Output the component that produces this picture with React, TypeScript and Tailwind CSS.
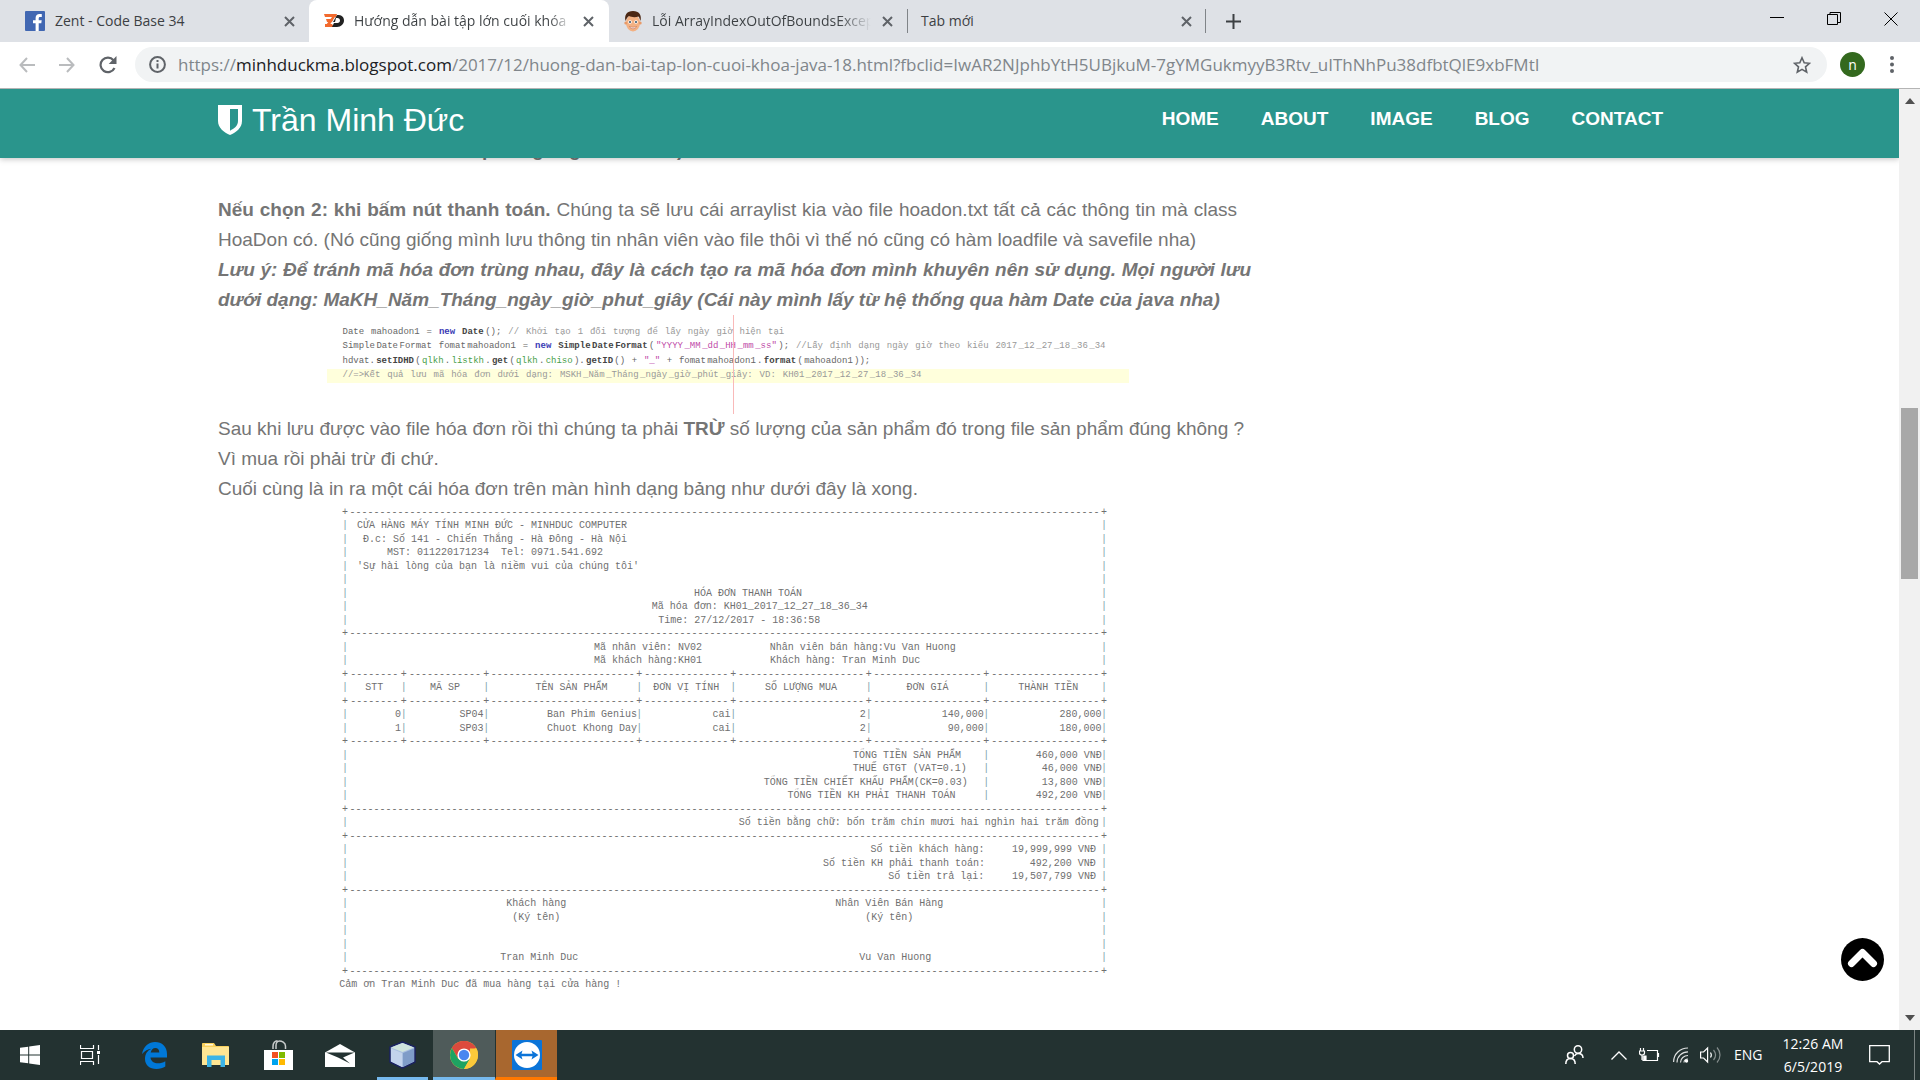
import React from "react";

const UI_FONT = "font-['Open_Sans','Noto_Sans',sans-serif]";

/* ---------- Browser chrome ---------- */

function Cross({ className = "" }: { className?: string }) {
  return (
    <svg className={className} width="11" height="11" viewBox="0 0 11 11" fill="none" stroke="#5f6368" strokeWidth="2">
      <path d="M1 1l9 9M10 1l-9 9" />
    </svg>
  );
}

function FacebookIcon() {
  return (
    <svg width="20" height="20" viewBox="0 0 20 20">
      <rect width="20" height="20" rx="1" fill="#4167b2" />
      <path d="M13.700 20v-7.700h2.600l.4-3h-3V7.400c0-.9.25-1.500 1.500-1.500h1.600V3.200c-.3 0-1.200-.1-2.300-.1-2.300 0-3.900 1.400-3.900 4v2.200H8v3h2.600V20z" fill="#fff" />
    </svg>
  );
}

function ZentIcon() {
  return (
    <svg width="20" height="14" viewBox="0 0 20 14">
      <path d="M0 0h13l-1 3H1zM2 5h7l-1 3H3zM1 10h7l2 3H1z" fill="#f26a2e" />
      <path d="M8 3l-6 8 3 1 6-9z" fill="#f26a2e" />
      <path d="M13 1c5 0 7 2 7 5.500S17 13 13 13H8l2-4h3.500c1.500 0 2.500-1 2.500-2.500S15 4 13.500 4H12l-1 4H9z" fill="#222" />
    </svg>
  );
}

function FaceIcon() {
  return (
    <svg width="18" height="21" viewBox="0 0 18 21">
      <ellipse cx="9" cy="12" rx="7" ry="8.500" fill="#f3b183" />
      <circle cx="1.800" cy="12" r="1.500" fill="#e89a68" />
      <circle cx="16.200" cy="12" r="1.500" fill="#e89a68" />
      <path d="M1.500 10C0 4 3 0 9 0s9 4 7.500 10c-.8-2-1-3.500-2-4.500-3 1-7 .8-9.500-.5C3 6 2.500 8 1.500 10z" fill="#4b2713" />
      <circle cx="6" cy="11" r="1.800" fill="#fff" />
      <circle cx="12" cy="11" r="1.800" fill="#fff" />
      <circle cx="6" cy="11" r="1" fill="#2d4d63" />
      <circle cx="12" cy="11" r="1" fill="#2d4d63" />
      <path d="M5.500 15.500c2 1 5 1 7 0-1 3-6 3-7 0z" fill="#fff" stroke="#b8563b" strokeWidth=".5" />
    </svg>
  );
}

function TabStrip() {
  return (
    <div className="flex h-[42px] items-stretch bg-[#dee1e6] text-sm text-[#3c4043]">
      <div className="flex w-[309px] shrink-0 items-center pl-[25px] pr-[14px]">
        <FacebookIcon />
        <span className="ml-[10px] flex-1 whitespace-nowrap">Zent - Code Base 34</span>
        <button aria-label="Close tab"><Cross /></button>
      </div>
      <div className="flex w-[300px] shrink-0 items-center rounded-t-lg bg-white pl-[15px] pr-[15px]">
        <ZentIcon />
        <span className="ml-[10px] w-[217px] overflow-hidden whitespace-nowrap bg-gradient-to-r from-[#3c4043] from-90% to-white bg-clip-text text-transparent">
          Hướng dẫn bài tập lớn cuối khóa
        </span>
        <button aria-label="Close tab" className="ml-auto"><Cross /></button>
      </div>
      <div className="flex w-[298px] shrink-0 items-center pl-[15px] pr-[14px]">
        <FaceIcon />
        <span className="ml-[10px] w-[219px] overflow-hidden whitespace-nowrap bg-gradient-to-r from-[#3c4043] from-85% to-[#dee1e6] bg-clip-text text-transparent">
          Lỗi ArrayIndexOutOfBoundsExcep
        </span>
        <button aria-label="Close tab" className="ml-auto"><Cross /></button>
      </div>
      <div className="my-[9px] w-[299px] shrink-0 border-x border-[#808488] pl-[13px] pr-[13px]">
        <div className="flex h-full items-center">
          <span className="flex-1">Tab mới</span>
          <button aria-label="Close tab"><Cross /></button>
        </div>
      </div>
      <button aria-label="New tab" className="ml-[20px]">
        <svg width="15" height="15" viewBox="0 0 15 15" stroke="#3c4043" strokeWidth="2"><path d="M7.500 0v15M0 7.500h15" /></svg>
      </button>
      <div className="ml-auto flex items-start gap-[43px] pr-[22px] pt-[12px]">
        <button aria-label="Minimize">
          <svg width="14" height="14" viewBox="0 0 14 14"><path d="M0 5.500h14" stroke="#000" /></svg>
        </button>
        <button aria-label="Restore">
          <svg width="14" height="14" viewBox="0 0 14 14" fill="none" stroke="#000"><path d="M.5 2.500h10v10H.5zM3 2.500v-2h10.500v10H11" /></svg>
        </button>
        <button aria-label="Close">
          <svg width="14" height="14" viewBox="0 0 14 14" stroke="#000"><path d="M.5.5l13 13M13.500.5l-13 13" /></svg>
        </button>
      </div>
    </div>
  );
}

function Toolbar() {
  return (
    <div className="flex h-[47px] items-start border-b border-[#b4b4b4] bg-white pt-[5px]">
      <div className="flex h-[35px] w-[135px] shrink-0 items-center gap-[24px] pl-[19px]">
        <button aria-label="Back">
          <svg width="16" height="16" viewBox="0 0 16 16" fill="none" stroke="#babcbe" strokeWidth="2"><path d="M16 8H1.500M8 1L1.500 8 8 15" /></svg>
        </button>
        <button aria-label="Forward">
          <svg width="16" height="16" viewBox="0 0 16 16" fill="none" stroke="#babcbe" strokeWidth="2"><path d="M0 8h14.500M8 1l6.500 7L8 15" /></svg>
        </button>
        <button aria-label="Reload">
          <svg width="18" height="18" viewBox="0 0 18 18" fill="none" stroke="#5f6368" strokeWidth="2.200">
            <path d="M15.500 12A7.300 7.300 0 1 1 14.500 4.200" />
            <path d="M17.500 0v8H9.700z" fill="#5f6368" stroke="none" />
          </svg>
        </button>
      </div>
      <div className="flex h-[35px] min-w-0 flex-1 items-center rounded-full bg-[#f1f3f4] pl-[14px] pr-[16px]">
        <svg width="17" height="17" viewBox="0 0 17 17" fill="none" stroke="#5f6368" strokeWidth="2">
          <circle cx="8.500" cy="8.500" r="7.400" />
          <path d="M8.500 7.500v5M8.500 4v2" />
        </svg>
        <div role="textbox" aria-label="Address" className="ml-[12px] flex-1 overflow-hidden whitespace-nowrap text-[17px] leading-[24px] text-[#80868b]">
          https://<span className="text-[#202124]">minhduckma.blogspot.com</span>/2017/12/huong-dan-bai-tap-lon-cuoi-khoa-java-18.html?fbclid=IwAR2NJphbYtH5UBjkuM-7gYMGukmyyB3Rtv_uIThNhPu38dfbtQlE9xbFMtI
        </div>
        <button aria-label="Bookmark">
          <svg width="18" height="18" viewBox="0 0 18 18" fill="none" stroke="#5f6368" strokeWidth="1.600">
            <path d="M9 1.800l2.200 5 5.300.5-4 3.600 1.200 5.300L9 13.400l-4.700 2.800 1.200-5.300-4-3.600 5.300-.5z" />
          </svg>
        </button>
      </div>
      <button className="ml-[13px] mt-[5px] flex size-[25px] items-center justify-center rounded-full bg-[#33691e] text-sm leading-none text-white">n</button>
      <button aria-label="Menu" className="ml-[25px] mr-[26px] mt-[9px]">
        <svg width="4" height="17" viewBox="0 0 4 17" fill="#5f6368"><circle cx="2" cy="2" r="2" /><circle cx="2" cy="8.500" r="2" /><circle cx="2" cy="15" r="2" /></svg>
      </button>
    </div>
  );
}

/* ---------- Web page ---------- */

const NAV = ["HOME", "ABOUT", "IMAGE", "BLOG", "CONTACT"];

function SiteHeader() {
  return (
    <header className="relative z-10 h-[69px] shrink-0 bg-[#2a958c] text-white shadow-[0_1px_6px_rgba(0,0,0,0.25)]">
      <div className="mx-auto flex max-w-[1463px] items-start justify-between pr-[18px]">
        <a href="#home" className="flex items-center gap-[10px] pt-[12px] text-[32px] leading-[38px]">
          <svg width="24" height="30" viewBox="0 0 24 30">
            <path d="M0 0h24v16c0 7-6 11.500-12 14C6 27.500 0 23 0 16z" fill="#fff" />
            <path d="M12 4h8v12c0 5-4 7.500-8 9.700z" fill="#2a958c" />
          </svg>
          <span>Trần Minh Đức</span>
        </a>
        <nav className="flex gap-[42px] pt-[16px] text-[19px] font-bold leading-[28px]">
          {NAV.map((n) => (
            <a key={n} href={"#" + n.toLowerCase()}>{n}</a>
          ))}
        </nav>
      </div>
    </header>
  );
}

type Tok = [string, string?];

const KW = "text-[#3b3bb5] font-bold";
const FN = "text-[#444] font-bold";
const STR = "text-[#c04aa8]";
const OBJ = "text-[#4aa04a]";
const CM = "text-[#999]";

const words = (s: string, cls: string): Tok[] =>
  s.split(" ").map((w, i, a) => [i < a.length - 1 ? w + " " : w, cls] as Tok);

const CODE: { width: string; toks: Tok[] }[] = [
  {
    width: "w-[442px]",
    toks: [["Date "], ["mahoadon1 "], ["= "], ["new ", KW], ["Date", FN], ["(); "], ...words("// Khởi tạo 1 đối tượng để lấy ngày giờ hiện tại", CM)],
  },
  {
    width: "w-[763px]",
    toks: [
      ["Simple"], ["Date"], ["Format "], ["fomat"], ["mahoadon1 "], ["= "], ["new ", KW],
      ["Simple", FN], ["Date", FN], ["Format", FN], ["("],
      ['"YYYY', STR], ["_MM", STR], ["_dd", STR], ["_HH", STR], ["_mm", STR], ['_ss"', STR], ["); "],
      ...words("//Lấy định dạng ngày giờ theo kiểu", CM), [" 2017", CM], ["_12", CM], ["_27", CM], ["_18", CM], ["_36", CM], ["_34", CM],
    ],
  },
  {
    width: "w-[528px]",
    toks: [
      ["hdvat."], ["setIDHD", FN], ["("], ["qlkh", OBJ], ["."], ["listkh", OBJ], ["."], ["get", FN], ["("], ["qlkh", OBJ], ["."], ["chiso", OBJ], [")."],
      ["getID", FN], ["() "], ["+ "], ['"_" ', STR], ["+ "], ["fomat"], ["mahoadon1"], ["."], ["format", FN], ["("], ["mahoadon1"], ["));"],
    ],
  },
  {
    width: "w-[579px]",
    toks: [
      ...words("//=>Kết quả lưu mã hóa đơn dưới dạng:", CM), [" MSKH", CM], ["_Năm", CM], ["_Tháng", CM], ["_ngày", CM], ["_giờ", CM], ["_phút", CM],
      ["_giây: ", CM], ["VD: ", CM], ["KH01", CM], ["_2017", CM], ["_12", CM], ["_27", CM], ["_18", CM], ["_36", CM], ["_34", CM],
    ],
  },
];

function CodeFigure() {
  return (
    <figure className="relative mx-auto grid h-[99px] w-[802px] grid-rows-[10px_repeat(4,minmax(0,1fr))_31px] font-['Liberation_Mono',monospace] text-[9px] leading-none text-[#666]">
      <div />
      {CODE.map((line, i) => (
        <div key={i} className={"flex items-center pl-[16px] " + (i === 3 ? "bg-[#ffffdc]" : "")}>
          <code className={"flex justify-between whitespace-pre font-['Liberation_Mono',monospace] " + line.width}>
            {line.toks.map(([t, c], j) => (
              <span key={j} className={c}>{t}</span>
            ))}
          </code>
        </div>
      ))}
      <div />
      <div className="absolute inset-y-0 left-[406px] w-px bg-[#f9b9b9]" />
    </figure>
  );
}

/* Receipt printed on a 130-column character raster: [column, text] pieces per line. */
type Piece = [number, string];
const COLS = 130;

const rule = (...stops: number[]): Piece[] => {
  const all = [0, ...stops, 129];
  const out: Piece[] = [];
  all.forEach((c, i) => {
    out.push([c, "+"]);
    if (i < all.length - 1) out.push([c + 1, "-".repeat(all[i + 1] - c - 1)]);
  });
  return out;
};
const boxed = (...pieces: Piece[]): Piece[] => [[0, "|"], ...pieces, [129, "|"]];
const STOPS = [10, 24, 50, 66, 89, 109];
const cells = (...pieces: Piece[]): Piece[] => {
  const out: Piece[] = [[0, "|"]];
  pieces.forEach((p, i) => out.push(p, [STOPS[i] ?? 129, "|"]));
  return out;
};

const RECEIPT: Piece[][] = [
  rule(),
  boxed([3, "CỬA HÀNG MÁY TÍNH MINH ĐỨC - MINHDUC COMPUTER"]),
  boxed([4, "Đ.c: Số 141 - Chiến Thắng - Hà Đông - Hà Nội"]),
  boxed([8, "MST: 011220171234  Tel: 0971.541.692"]),
  boxed([3, "'Sự hài lòng của bạn là niềm vui của chúng tôi'"]),
  boxed(),
  boxed([60, "HÓA ĐƠN THANH TOÁN"]),
  boxed([53, "Mã hóa đơn: KH01_2017_12_27_18_36_34"]),
  boxed([54, "Time: 27/12/2017 - 18:36:58"]),
  rule(),
  boxed([43, "Mã nhân viên: NV02"], [73, "Nhân viên bán hàng:Vu Van Huong"]),
  boxed([43, "Mã khách hàng:KH01"], [73, "Khách hàng: Tran Minh Duc"]),
  rule(...STOPS),
  cells([4, "STT"], [15, "MÃ SP"], [33, "TÊN SẢN PHẨM"], [53, "ĐƠN VỊ TÍNH"], [72, "SỐ LƯỢNG MUA"], [96, "ĐƠN GIÁ"], [115, "THÀNH TIỀN"]),
  rule(...STOPS),
  cells([9, "0"], [20, "SP04"], [35, "Ban Phim Genius"], [63, "cai"], [88, "2"], [102, "140,000"], [122, "280,000"]),
  cells([9, "1"], [20, "SP03"], [35, "Chuot Khong Day"], [63, "cai"], [88, "2"], [103, "90,000"], [122, "180,000"]),
  rule(...STOPS),
  boxed([87, "TỔNG TIỀN SẢN PHẨM"], [109, "|"], [118, "460,000 VNĐ"]),
  boxed([87, "THUẾ GTGT (VAT=0.1)"], [109, "|"], [119, "46,000 VNĐ"]),
  boxed([72, "TỔNG TIỀN CHIẾT KHẤU PHẨM(CK=0.03)"], [109, "|"], [119, "13,800 VNĐ"]),
  boxed([76, "TỔNG TIỀN KH PHẢI THANH TOÁN"], [109, "|"], [118, "492,200 VNĐ"]),
  rule(),
  boxed([68, "Số tiền bằng chữ: bốn trăm chín mươi hai nghìn hai trăm đồng"]),
  rule(),
  boxed([90, "Số tiền khách hàng:"], [114, "19,999,999 VNĐ"]),
  boxed([82, "Số tiền KH phải thanh toán:"], [117, "492,200 VNĐ"]),
  boxed([93, "Số tiền trả lại:"], [114, "19,507,799 VNĐ"]),
  rule(),
  boxed([28, "Khách hàng"], [84, "Nhân Viên Bán Hàng"]),
  boxed([29, "(Ký tên)"], [89, "(Ký tên)"]),
  boxed(),
  boxed(),
  boxed([27, "Tran Minh Duc"], [88, "Vu Van Huong"]),
  rule(),
  [[0, "Cảm ơn Tran Minh Duc đã mua hàng tại cửa hàng !"]],
];

function Receipt() {
  return (
    <figure className="ml-[124px] mt-[2px] grid h-[486px] w-[765px] auto-rows-fr font-['Liberation_Mono',monospace] text-[10px] leading-none text-[#707070]">
      {RECEIPT.map((line, i) => (
        <div key={i} className="grid min-h-0 grid-cols-[repeat(130,minmax(0,1fr))] items-center">
          {line.map(([col, text], j) => {
            const dashes = text.startsWith("--");
            return (
              <span
                key={j}
                className={"flex justify-center whitespace-pre " + (text === "|" ? "text-[#7fa3ad]" : "")}
                style={{ gridColumn: `${col + 1} / span ${Math.min(text.length, COLS - col)}`, gridRow: 1 }}
              >
                {dashes ? text.slice(0, Math.floor(text.length * 0.98)) : text}
              </span>
            );
          })}
        </div>
      ))}
    </figure>
  );
}

function Article() {
  return (
    <main className="mx-auto w-full max-w-[1463px]">
      <article className="max-w-[1019px] text-justify text-[19px] leading-[30px] text-[#757575]">
        <p className="-mt-[23px] mb-[30px] flex pl-[264px] font-bold">
          <span className="w-[50px]">p</span>
          <span className="w-[37px]">g</span>
          <span className="w-[108px]">g</span>
          <span>)</span>
        </p>
        <p>
          <b>Nếu chọn 2: khi bấm nút thanh toán.</b> Chúng ta sẽ lưu cái arraylist kia vào file hoadon.txt tất cả các thông tin mà class HoaDon có. (Nó cũng giống mình lưu thông tin nhân viên vào file thôi vì thế nó cũng có hàm loadfile và savefile nha)
        </p>
        <p className="-mr-[14px] font-bold italic">
          Lưu ý: Để tránh mã hóa đơn trùng nhau, đây là cách tạo ra mã hóa đơn mình khuyên nên sử dụng. Mọi người lưu dưới dạng: MaKH_Năm_Tháng_ngày_giờ_phut_giây (Cái này mình lấy từ hệ thống qua hàm Date của java nha)
        </p>
        <CodeFigure />
        <p className="-mr-[14px] text-left">
          Sau khi lưu được vào file hóa đơn rồi thì chúng ta phải <b>TRỪ</b> số lượng của sản phẩm đó trong file sản phẩm đúng không ? Vì mua rồi phải trừ đi chứ.
        </p>
        <p>Cuối cùng là in ra một cái hóa đơn trên màn hình dạng bảng như dưới đây là xong.</p>
        <Receipt />
      </article>
    </main>
  );
}

function Scrollbar() {
  return (
    <div className="flex w-[21px] shrink-0 flex-col items-center bg-[#f1f1f1] py-[9px]">
      <svg width="10" height="6" viewBox="0 0 10 6"><path d="M5 0l5 6H0z" fill="#505050" /></svg>
      <div className="mt-[304px] h-[171px] w-[17px] bg-[#a8a8a8]" />
      <svg className="mt-auto" width="10" height="6" viewBox="0 0 10 6"><path d="M5 6l5-6H0z" fill="#505050" /></svg>
    </div>
  );
}

/* ---------- Taskbar ---------- */

function TaskButton({ label, className = "", children }: { label: string; className?: string; children: React.ReactNode }) {
  return (
    <button aria-label={label} className={"flex w-[62px] shrink-0 items-center justify-center " + className}>
      {children}
    </button>
  );
}

function Taskbar() {
  return (
    <footer className="flex h-[50px] shrink-0 items-stretch bg-[#233231] text-white">
      <button aria-label="Start" className="flex w-[60px] items-center justify-center">
        <svg width="20" height="20" viewBox="0 0 20 20" fill="#fff"><path d="M0 2.800l8.200-1.100v7.800H0zM9.200 1.500L20 0v9.500H9.200zM0 10.500h8.200v7.800L0 17.200zM9.200 10.500H20V20L9.200 18.500z" /></svg>
      </button>
      <button aria-label="Task view" className="flex w-[63px] items-center pl-[20px]">
        <svg width="21" height="20" viewBox="0 0 21 20" fill="none" stroke="#fff">
          <path d="M.5 0v3.500h13V0M.5 20v-3.500h13V20M1.500 6.500h11v7h-11zM18.500 0v5M18.500 10v9" strokeWidth="1.200" />
          <rect x="17" y="6" width="3" height="3" fill="#fff" stroke="none" />
        </svg>
      </button>
      <TaskButton label="Edge">
        <svg width="25" height="27" viewBox="0 0 25 27">
          <path d="M0 12C1.500 4 7 0 13 0c7 0 12 4.500 12 12v3.500H8.500c.3 4 3.800 5.800 7.500 5.800 2.800 0 5-.6 7.300-2v5.200C21 26 18 27 14.500 27 7.500 27 3 23 3 17c0-5 2.500-8.500 6.500-10.200C6 7 2.500 9 0 12zm8.700-1.500h8.600C17.300 7.500 16 6 13.300 6 11 6 9.200 7.800 8.700 10.500z" fill="#0078d7" />
        </svg>
      </TaskButton>
      <TaskButton label="File Explorer">
        <svg width="28" height="24" viewBox="0 0 28 24">
          <path d="M0 1c0-.6.4-1 1-1h11l2 3h12c.6 0 1 .4 1 1v18H0z" fill="#f8d05c" />
          <rect x="3" y="1" width="8" height="1.500" fill="#fff6d8" />
          <path d="M0 4h27v18H0z" fill="#ffe693" />
          <path d="M5 12.500h18V24h-4.500v-7h-9v7H5z" fill="#3cb4e6" />
        </svg>
      </TaskButton>
      <TaskButton label="Microsoft Store">
        <svg width="29" height="31" viewBox="0 0 29 31">
          <path d="M9 9V6.500C9 3 11 .8 13.500.8M12 9V5.500c0-2.500 1.500-4.500 3.500-4.500s6 1.500 6 5V9" fill="none" stroke="#c8cccc" strokeWidth="1.500" />
          <path d="M0 10h29v20H0z" fill="#fff" />
          <path d="M8 12h6v6H8z" fill="#f25022" /><path d="M15 12h6v6h-6z" fill="#7fba00" />
          <path d="M8 19h6v6H8z" fill="#00a4ef" /><path d="M15 19h6v6h-6z" fill="#ffb900" />
        </svg>
      </TaskButton>
      <TaskButton label="Mail">
        <svg width="30" height="23" viewBox="0 0 30 23"><path d="M0 8.500L15 0l15 8.500V23H0z" fill="#fff" /><path d="M1 8.500h28.500L18 13.500l7 6-12-6z" fill="#233231" /></svg>
      </TaskButton>
      <TaskButton label="NetBeans" className="bg-[linear-gradient(#76b9ed,#76b9ed)] bg-[length:51px_3px] bg-bottom bg-no-repeat">
        <svg width="27" height="28" viewBox="0 0 27 28" stroke="#1b2260" strokeWidth="1.500" strokeLinejoin="round">
          <path d="M1 6L13.500 1 26 6v15l-12.500 6L1 21z" fill="#a9bfe0" />
          <path d="M2 6.500L13.500 2 25 6.500 13.500 11z" fill="#cfe3dd" stroke="none" />
          <path d="M2 7.500L13 12v14L2 20.500z" fill="#c3d3ec" stroke="none" />
          <path d="M14 12l11-4.500v13L14 26z" fill="#7f9cc8" stroke="none" />
        </svg>
      </TaskButton>
      <TaskButton label="Chrome" className="border-b-[3px] border-[#76b9ed] bg-[#4f5b5a] pt-[3px]">
        <svg width="28" height="28" viewBox="0 0 28 28">
          <circle cx="14" cy="14" r="14" fill="#fbc93a" />
          <path d="M14 14L1.900 7A14 14 0 0 1 26.100 7z" fill="#dc4a3d" />
          <path d="M14 7h12.100A14 14 0 0 0 1.900 7L8 17.500z" fill="#dc4a3d" />
          <path d="M1.900 7A14 14 0 0 0 14 28l6-10.500-6 3-6-3z" fill="#1ea362" />
          <path d="M14 28l6.100-10.500L20 7.500h6.400A14 14 0 0 1 14 28z" fill="#fbc93a" />
          <circle cx="14" cy="14" r="6.600" fill="#fff" />
          <circle cx="14" cy="14" r="5.200" fill="#4a86f0" />
        </svg>
      </TaskButton>
      <TaskButton label="TeamViewer" className="border-b-[3px] border-l border-b-[#ff7800] border-l-[#233231] bg-[#a8672f] pt-[3px]">
        <svg width="30" height="30" viewBox="0 0 30 30">
          <rect width="30" height="30" rx="1" fill="#0b74d8" />
          <circle cx="15" cy="15" r="13" fill="#fff" />
          <path d="M3.500 15l7-4.500-1 3.200h11l-1-3.200 7 4.500-7 4.500 1-3.200h-11l1 3.200z" fill="#0b74d8" />
        </svg>
      </TaskButton>

      <div className="ml-auto flex items-center">
        <svg width="19" height="20" viewBox="0 0 19 20" fill="none" stroke="#fff" strokeWidth="1.500">
          <circle cx="13" cy="4.500" r="3.700" /><circle cx="5.500" cy="10.500" r="3" />
          <path d="M9.500 11c1-2 2-2.500 3.500-2.500 3 0 5 1.500 5 4.500M.8 19c0-3.500 2-5.500 4.700-5.500S10.200 15.500 10.200 19" />
        </svg>
        <svg className="ml-[27px]" width="16" height="9" viewBox="0 0 16 9" fill="none" stroke="#fff" strokeWidth="1.300"><path d="M.5 8.500L8 1l7.500 7.500" /></svg>
        <svg className="ml-[12px]" width="21" height="14" viewBox="0 0 21 14" fill="none" stroke="#fff" strokeWidth="1.200">
          <path d="M8 2.500h10.500v10H4V8M19.500 5v4" /><path d="M1.500 0v3M4.500 0v3M.5 3h5v2c0 1.500-1 2-2.500 2S.5 6.500.5 5zM3 7v5" />
          <path d="M5 8h2v4H5z" fill="#fff" />
        </svg>
        <svg className="ml-[13px]" width="16" height="16" viewBox="0 0 16 16" fill="none" stroke="#fff" strokeWidth="1.200">
          <path d="M.6 15C.6 7 7 1 15 1M4 15.500C4 9.500 9 4.800 15 4.800M7.500 15.500c0-4 3.500-7 7.500-7M11 15.500c0-2 1.800-3.500 4-3.500" opacity=".85" />
          <circle cx="13.500" cy="14" r="1.700" fill="#fff" stroke="none" />
        </svg>
        <svg className="ml-[11px]" width="21" height="18" viewBox="0 0 21 18" fill="none" stroke="#fff" strokeWidth="1.200">
          <path d="M.6 6h3l4-4v14l-4-4h-3z" /><path d="M10.500 6.500c1 1.500 1 3.500 0 5" /><path d="M13.500 4c2.500 3 2.500 7 0 10M17 1.500c4 4.500 4 10.500 0 15" opacity=".45" />
        </svg>
        <span className="ml-[13px] w-[30px] text-sm">ENG</span>
        <div className="ml-[14px] w-[70px] text-center text-sm leading-[23px]">
          <div className="whitespace-nowrap">12:26 AM</div>
          <div>6/5/2019</div>
        </div>
        <svg className="ml-[21px]" width="21" height="20" viewBox="0 0 21 20" fill="none" stroke="#fff" strokeWidth="1.300"><path d="M.7.7h19.600v16H13L10.500 19 8 16.700H.7z" /></svg>
        <div className="ml-[24px] mr-[5px] h-[50px] w-px bg-[#7b8483]" />
      </div>
    </footer>
  );
}

export default function App() {
  return (
    <div className={"flex h-screen flex-col overflow-hidden bg-white " + UI_FONT}>
      <TabStrip />
      <Toolbar />
      <div className="relative flex min-h-0 flex-1">
        <div className="flex min-w-0 flex-1 flex-col overflow-hidden font-['Liberation_Sans',Arial,sans-serif]">
          <SiteHeader />
          <Article />
        </div>
        <Scrollbar />
        <button aria-label="Back to top" className="absolute bottom-[49px] right-[36px]">
          <svg width="43" height="43" viewBox="0 0 43 43">
            <circle cx="21.500" cy="21.500" r="21.500" fill="#000" />
            <path d="M10.500 25.500l11-11 11 11" fill="none" stroke="#fff" strokeWidth="7" strokeLinejoin="round" strokeLinecap="round" />
          </svg>
        </button>
      </div>
      <Taskbar />
    </div>
  );
}
